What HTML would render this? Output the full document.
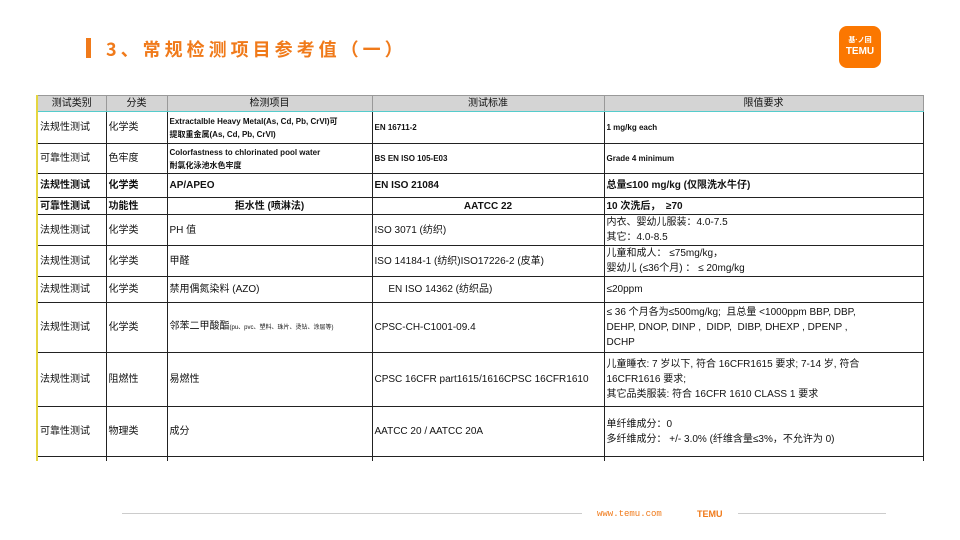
<!DOCTYPE html>
<html><head><meta charset="utf-8"><style>
body{margin:0;width:960px;height:540px;background:#fff;position:relative;overflow:hidden;font-family:"Liberation Sans","Noto Sans CJK SC",sans-serif;}
.bar{position:absolute;left:86px;top:38px;width:5px;height:20px;background:#f07a1a;}
.title{position:absolute;left:106px;top:36px;font-size:18px;font-weight:bold;color:#f07a1a;letter-spacing:4px;font-family:"Noto Sans CJK SC",sans-serif;}
.logo{position:absolute;left:839px;top:26px;width:42px;height:42px;border-radius:8px;background:#fb7701;color:#fff;font-size:10px;font-weight:bold;text-align:center;line-height:11px;}
table{position:absolute;left:36px;top:95px;border-collapse:collapse;table-layout:fixed;font-size:10px;color:#111;}
td{border:1px solid #222;padding:0 2px;overflow:hidden;white-space:nowrap;vertical-align:middle;line-height:15px;}
tr.h td{background:#d4d4d4;text-align:center;height:15px;border-color:#999;border-bottom:1px solid #5cc;}
.b{font-weight:bold}
.s{font-size:8px;line-height:13px}
.c{text-align:center}
.foot{position:absolute;top:513px;height:1px;background:#ccc;}
</style></head><body>
<div class="bar"></div>
<div class="title">3、常规检测项目参考值（一）</div>
<div class="logo"><div style="font-size:7px;margin-top:9px">基&#183;ノ回</div><div>TEMU</div></div>
<table style="border-left:2px solid #e5d640">
<colgroup><col style="width:69px"><col style="width:61px"><col style="width:205px"><col style="width:232px"><col style="width:319px"></colgroup>
<tr class="h"><td>测试类别</td><td>分类</td><td>检测项目</td><td>测试标准</td><td>限值要求</td></tr>
<tr style="height:32px"><td>法规性测试</td><td>化学类</td><td class="s b" style="font-size:8px">Extractalble Heavy Metal(As, Cd, Pb, CrVI)可<br>提取重金属(As, Cd, Pb, CrVI)</td><td class="s b">EN 16711-2</td><td class="s b">1 mg/kg each</td></tr>
<tr style="height:30px"><td>可靠性测试</td><td>色牢度</td><td class="s b">Colorfastness to chlorinated pool water<br>耐氯化泳池水色牢度</td><td class="s b">BS EN ISO 105-E03</td><td class="s b">Grade 4 minimum</td></tr>
<tr style="height:24px" class="b"><td>法规性测试</td><td>化学类</td><td>AP/APEO</td><td>EN ISO 21084</td><td>总量≤100 mg/kg (仅限洗水牛仔)</td></tr>
<tr style="height:17px" class="b"><td>可靠性测试</td><td>功能性</td><td class="c">拒水性 (喷淋法)</td><td class="c">AATCC 22</td><td>10 次洗后，&nbsp; ≥70</td></tr>
<tr style="height:30px"><td>法规性测试</td><td>化学类</td><td>PH 值</td><td>ISO 3071 (纺织)</td><td>内衣、婴幼儿服装：4.0-7.5<br>其它：4.0-8.5</td></tr>
<tr style="height:30px"><td>法规性测试</td><td>化学类</td><td>甲醛</td><td>ISO 14184-1 (纺织)ISO17226-2 (皮革)</td><td>儿童和成人： ≤75mg/kg，<br>婴幼儿 (≤36个月) ： ≤ 20mg/kg</td></tr>
<tr style="height:26px"><td>法规性测试</td><td>化学类</td><td>禁用偶氮染料 (AZO)</td><td>&nbsp;&nbsp;&nbsp;&nbsp;&nbsp;EN ISO 14362 (纺织品)</td><td>≤20ppm</td></tr>
<tr style="height:50px"><td>法规性测试</td><td>化学类</td><td>邻苯二甲酸酯<span style="font-size:6px">(pu、pvc、塑料、珠片、烫钻、涂层等)</span></td><td>CPSC-CH-C1001-09.4</td><td>≤ 36 个月各为≤500mg/kg;&nbsp; 且总量 &lt;1000ppm BBP, DBP,<br>DEHP, DNOP, DINP ,&nbsp; DIDP,&nbsp; DIBP, DHEXP , DPENP ,<br>DCHP</td></tr>
<tr style="height:54px"><td>法规性测试</td><td>阻燃性</td><td>易燃性</td><td>CPSC 16CFR part1615/1616CPSC 16CFR1610</td><td>儿童睡衣: 7 岁以下, 符合 16CFR1615 要求; 7-14 岁, 符合<br>16CFR1616 要求;<br>其它品类服装: 符合 16CFR 1610 CLASS 1 要求</td></tr>
<tr style="height:50px"><td>可靠性测试</td><td>物理类</td><td>成分</td><td>AATCC 20 / AATCC 20A</td><td>单纤维成分：0<br>多纤维成分： +/- 3.0% (纤维含量≤3%，不允许为 0)</td></tr>
<tr style="height:4px"><td style="border-bottom:none"></td><td style="border-bottom:none"></td><td style="border-bottom:none"></td><td style="border-bottom:none"></td><td style="border-bottom:none"></td></tr>
</table>
<div class="foot" style="left:122px;width:460px"></div>
<div style="position:absolute;left:597px;top:509px;font-size:9px;color:#f07a1a;font-family:'Liberation Mono',monospace">www.temu.com</div>
<div style="position:absolute;left:697px;top:509px;font-size:9px;color:#f07a1a;font-weight:bold">TEMU</div>
<div class="foot" style="left:738px;width:148px"></div>
</body></html>
